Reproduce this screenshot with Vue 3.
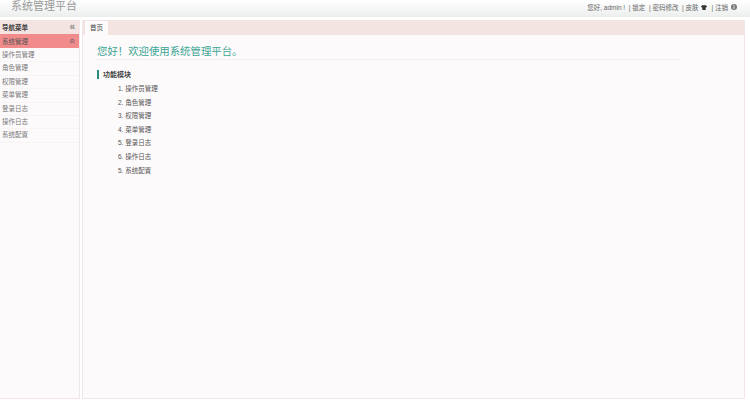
<template>
  <div class="page">
    <div class="header">
      <div class="logo">系统管理平台</div>
      <div class="user">
        <span>您好, admin ! &nbsp;| 锁定 &nbsp;| 密码修改 &nbsp;| 皮肤</span>
        <svg class="shirt" viewBox="0 0 10 8"><path d="M3 0 L0 2 L1 4 L2.2 3.4 V8 H7.8 V3.4 L9 4 L10 2 L7 0 Q5 1.4 3 0 Z" /></svg>
        <span class="sep">| 注销</span>
        <svg class="info" viewBox="0 0 10 10"><circle cx="5" cy="5" r="5" /><rect x="4.2" y="4.2" width="1.6" height="3.8" fill="#fff" /><rect x="4.2" y="2" width="1.6" height="1.5" fill="#fff" /></svg>
      </div>
    </div>
    <div class="main">
      <div class="side">
        <div class="side-title">
          <span>导航菜单</span>
          <span class="chev">«</span>
        </div>
        <div class="group">
          <span>系统管理</span>
          <span class="chev up">«</span>
        </div>
        <div class="menu">
          <div v-for="item in menu" :key="item" class="menu-item">{{ item }}</div>
        </div>
      </div>
      <div class="content">
        <div class="tabs">
          <div class="tab">首页</div>
        </div>
        <div class="panel">
          <div class="welcome">您好！欢迎使用系统管理平台。</div>
          <div class="module">功能模块</div>
          <div v-for="(item, index) in list" :key="item" class="row">{{ index === 6 ? 5 : index + 1 }}. {{ item }}</div>
        </div>
      </div>
    </div>
  </div>
</template>

<script setup>
const menu = ["操作员管理", "角色管理", "权限管理", "菜单管理", "登录日志", "操作日志", "系统配置"];
const list = ["操作员管理", "角色管理", "权限管理", "菜单管理", "登录日志", "操作日志", "系统配置"];
</script>

<style>
html, body {
  margin: 0;
  background: #fff;
}
</style>

<style scoped>
.page {
  width: 750px;
  height: 401px;
  display: flex;
  flex-direction: column;
  overflow: hidden;
  font-family: "Liberation Sans", "Noto Sans CJK SC", sans-serif;
  color: #555;
  font-size: 6.5px;
}
.header {
  height: 17px;
  flex: none;
  display: flex;
  justify-content: space-between;
  background: linear-gradient(to bottom, #fff, #eceeee);
}
.logo {
  margin-left: 11px;
  font-size: 11px;
  line-height: 13px;
  color: #999;
}
.user {
  display: flex;
  align-items: center;
  margin-right: 13px;
  height: 14px;
  color: #666;
  font-size: 6.5px;
}
.shirt {
  width: 6px;
  height: 5px;
  margin-left: 2px;
  fill: #333;
}
.sep {
  margin-left: 5px;
}
.info {
  width: 6px;
  height: 6px;
  margin-left: 3px;
  fill: #777;
}
.main {
  flex: 1;
  display: flex;
  gap: 2px;
  padding-top: 3px;
  background: #fff;
}
.side {
  width: 79px;
  height: 378px;
  background: #fdfafb;
  border-right: 1px solid #f0e8e8;
  border-bottom: 1px solid #f5e3e3;
}
.side-title {
  height: 14px;
  display: flex;
  align-items: center;
  justify-content: space-between;
  padding: 0 4px 0 2px;
  background: #f3e3e1;
  color: #444;
  font-weight: bold;
}
.group {
  height: 14px;
  display: flex;
  align-items: center;
  justify-content: space-between;
  padding: 0 4px 0 2px;
  background: #f28b8b;
  color: #555;
}
.chev {
  color: #888;
  font-size: 10px;
  line-height: 10px;
}
.chev.up {
  transform: rotate(90deg);
  color: #666;
}
.menu {
  padding-top: 1px;
}
.menu-item {
  height: 12.4px;
  line-height: 12.4px;
  padding-left: 2px;
  color: #777;
  border-bottom: 1px solid #f9f4f4;
}
.content {
  flex: 1;
  display: flex;
  flex-direction: column;
  margin-right: 5px;
  height: 379px;
}
.tabs {
  height: 15px;
  flex: none;
  background: #f3e3e1;
  padding-left: 2px;
  border-left: 1px solid #f0e8e8;
  border-right: 1px solid #f0e8e8;
}
.tab {
  width: 23px;
  height: 14px;
  margin-top: 1px;
  background: #fdfafb;
  text-align: center;
  line-height: 14px;
  color: #444;
}
.panel {
  flex: 1;
  background: #fdfafb;
  border: 1px solid #f3e6e6;
  border-top: 0;
  padding: 9px 14px;
}
.welcome {
  width: 584px;
  font-size: 10.4px;
  line-height: 15px;
  color: #3aa594;
  border-bottom: 1px solid #f3efef;
}
.module {
  margin-top: 10px;
  border-left: 2px solid #2a8d7f;
  padding-left: 4px;
  line-height: 9px;
  color: #444;
  font-size: 7px;
  font-weight: bold;
}
.row {
  margin-left: 21px;
  height: 13.6px;
  line-height: 13.6px;
  color: #555;
}
.module + .row {
  margin-top: 3px;
}
</style>
